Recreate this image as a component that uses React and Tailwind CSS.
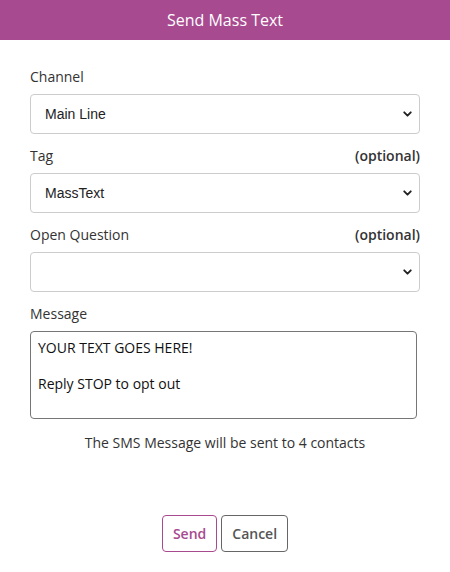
import { ChevronDown } from 'lucide-react'

function SelectField({ label, optional, value }) {
  return (
    <div>
      <div className="flex items-center justify-between h-5 mb-2">
        <span className="text-[#333]">{label}</span>
        {optional && <span className="font-semibold text-[#333]">(optional)</span>}
      </div>
      <div className="relative">
        <select
          className="w-full h-10 appearance-none rounded border border-[#ccc] bg-white pl-[14px] pr-8 text-[14px] text-[#222] font-['Liberation_Sans',Arial,sans-serif] focus:outline-none"
          defaultValue={value}
        >
          <option value={value}>{value}</option>
        </select>
        <ChevronDown
          size={13}
          strokeWidth={3.5}
          className="pointer-events-none absolute right-[6px] top-1/2 -translate-y-1/2 text-[#222]"
        />
      </div>
    </div>
  )
}

export default function App() {
  return (
    <div className="w-[450px] h-[572px] bg-white font-['Open_Sans',sans-serif] text-[14px]">
      <div className="h-10 bg-[#a84a8f] flex items-center justify-center">
        <h1 className="text-white text-[16px]">Send Mass Text</h1>
      </div>

      <div className="px-[30px] pt-[26px]">
        <div className="flex flex-col gap-[11px]">
          <SelectField label="Channel" value="Main Line" />
          <SelectField label="Tag" optional value="MassText" />
          <SelectField label="Open Question" optional value="" />
          <div>
            <div className="h-5 mb-2 flex items-center text-[#333]">Message</div>
            <textarea
              className="block w-[387px] h-[88px] resize-none rounded border border-[#767676] px-[7px] py-[7px] text-[14px] leading-[18px] text-[#111] focus:outline-none"
              defaultValue={'YOUR TEXT GOES HERE!\n\nReply STOP to opt out'}
            />
          </div>
        </div>

        <p className="mt-[13px] text-center text-[#333]">
          The SMS Message will be sent to 4 contacts
        </p>

        <div className="mt-[62px] flex justify-center gap-[4px]">
          <button className="h-[37px] px-[10px] rounded border border-[#a84a8f] text-[#a84a8f] font-semibold">
            Send
          </button>
          <button className="h-[37px] px-[10px] rounded border border-[#666] text-[#555] font-semibold">
            Cancel
          </button>
        </div>
      </div>
    </div>
  )
}
